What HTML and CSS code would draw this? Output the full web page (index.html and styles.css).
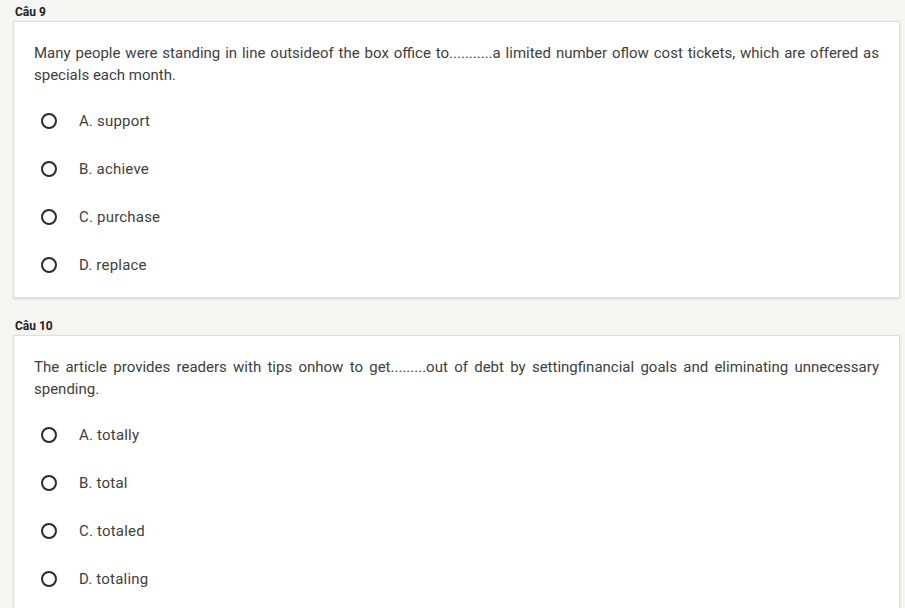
FILE: index.html
```html
<!DOCTYPE html>
<html>
<head>
<meta charset="utf-8">
<link rel="stylesheet" href="styles.css">
</head>
<body>
<div class="page">
  <section class="question">
    <div class="label">Câu 9</div>
    <div class="card">
      <p class="stem">Many people were standing in line outsideof the box office to...........a limited number oflow cost tickets, which are offered as specials each month.</p>
      <ul class="options">
        <li class="option"><span class="radio"></span><span>A. support</span></li>
        <li class="option"><span class="radio"></span><span>B. achieve</span></li>
        <li class="option"><span class="radio"></span><span>C. purchase</span></li>
        <li class="option"><span class="radio"></span><span>D. replace</span></li>
      </ul>
    </div>
  </section>
  <section class="question">
    <div class="label">Câu 10</div>
    <div class="card">
      <p class="stem">The article provides readers with tips onhow to get.........out of debt by settingfinancial goals and eliminating unnecessary spending.</p>
      <ul class="options">
        <li class="option"><span class="radio"></span><span>A. totally</span></li>
        <li class="option"><span class="radio"></span><span>B. total</span></li>
        <li class="option"><span class="radio"></span><span>C. totaled</span></li>
        <li class="option"><span class="radio"></span><span>D. totaling</span></li>
      </ul>
    </div>
  </section>
</div>
</body>
</html>
```

FILE: styles.css
```css
html, body {
  margin: 0;
  padding: 0;
  background: #f5f5f2;
}
body {
  font-family: Roboto, "Liberation Sans", sans-serif;
  color: #3a3a3a;
}
.page {
  padding: 4px 5px 0 13px;
  display: flex;
  flex-direction: column;
  gap: 20px;
}
.label {
  font-size: 12px;
  font-weight: bold;
  color: #222;
  line-height: 17px;
  padding-left: 2px;
}
.card {
  background: #fff;
  border: 1px solid #dedede;
  box-shadow: 0 1px 2px rgba(0,0,0,0.12);
  padding: 20px 20px 8px 20px;
}
.stem {
  margin: 0;
  font-size: 15px;
  line-height: 22px;
  text-align: justify;
  color: #404040;
}
.options {
  list-style: none;
  margin: 11px 0 0 0;
  padding: 0;
}
.option {
  height: 48px;
  display: flex;
  align-items: center;
  gap: 22px;
  font-size: 15px;
  letter-spacing: 0.2px;
  color: #404040;
  padding-left: 7px;
}
.radio {
  width: 12px;
  height: 12px;
  border: 2px solid #2b2b2b;
  border-radius: 50%;
  flex: none;
}
```
